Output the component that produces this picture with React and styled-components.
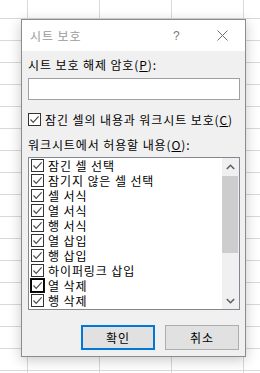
import React from 'react';
import styled, { createGlobalStyle } from 'styled-components';

const GlobalStyle = createGlobalStyle`
  html, body {
    margin: 0;
    padding: 0;
    width: 260px;
    height: 373px;
    overflow: hidden;
    background-color: #fff;
    background-image:
      linear-gradient(to right, #d9d9d9 1px, transparent 1px),
      linear-gradient(to bottom, #d9d9d9 1px, transparent 1px);
    background-size: 72px 100%, 100% 22px;
    background-position: 27px 0, 0 18px;
    font-family: "Noto Sans CJK KR", "Noto Sans", sans-serif;
  }
`;

const items = [
  '잠긴 셀 선택',
  '잠기지 않은 셀 선택',
  '셀 서식',
  '열 서식',
  '행 서식',
  '열 삽입',
  '행 삽입',
  '하이퍼링크 삽입',
  '열 삭제',
  '행 삭제',
];

const CheckMark = () => (
  <svg width="11" height="11" viewBox="0 0 11 11">
    <path d="M1.5 5.5 L4.2 8.3 L9.6 2.4" fill="none" stroke="#4d4d4d" strokeWidth="1.2" />
  </svg>
);

const Check = ({ focused }) => (
  <Box $focused={focused}>
    <CheckMark />
  </Box>
);

const App = () => {
  return (
    <>
      <GlobalStyle />
      <Dialog>
        <TitleBar>
          <Title>시트 보호</Title>
          <Help>?</Help>
          <Close>
            <svg width="11" height="11" viewBox="0 0 11 11">
              <path d="M0.5 0.5 L10.5 10.5 M10.5 0.5 L0.5 10.5" stroke="#6e6e6e" strokeWidth="1" />
            </svg>
          </Close>
        </TitleBar>
        <Body>
          <Label>시트 보호 해제 암호(<u>P</u>):</Label>
          <TextInput />
          <CheckRow>
            <Check />
            <span>잠긴 셀의 내용과 워크시트 보호(<u>C</u>)</span>
          </CheckRow>
          <Label $top={10}>워크시트에서 허용할 내용(<u>O</u>):</Label>
          <ListBox>
            <Items>
              {items.map((t, i) => (
                <Item key={t}>
                  <Check focused={i === 8} />
                  <span>{t}</span>
                </Item>
              ))}
            </Items>
            <ScrollBar>
              <Arrow>
                <svg width="9" height="6" viewBox="0 0 9 6">
                  <path d="M0.8 5 L4.5 1.3 L8.2 5" fill="none" stroke="#606060" strokeWidth="1.6" />
                </svg>
              </Arrow>
              <Track>
                <Thumb />
              </Track>
              <Arrow>
                <svg width="9" height="6" viewBox="0 0 9 6">
                  <path d="M0.8 1 L4.5 4.7 L8.2 1" fill="none" stroke="#606060" strokeWidth="1.6" />
                </svg>
              </Arrow>
            </ScrollBar>
          </ListBox>
          <ButtonRow>
            <Button $primary>확인</Button>
            <Button>취소</Button>
          </ButtonRow>
        </Body>
      </Dialog>
    </>
  );
};

export default App;

const Dialog = styled.div`
  position: absolute;
  left: 21px;
  top: 19px;
  width: 223px;
  height: 336px;
  border: 1px solid #8c8c8c;
  background: #f0f0f0;
  box-shadow: 0 3px 12px rgba(0, 0, 0, 0.22);
  display: flex;
  flex-direction: column;
  font-size: 12px;
  letter-spacing: 0.9px;
  color: #000;
`;

const TitleBar = styled.div`
  height: 31px;
  background: #fff;
  display: flex;
  align-items: center;
  padding-left: 8px;
`;

const Title = styled.div`
  flex: 1;
  color: #9a9a9a;
  font-size: 12px;
`;

const Help = styled.div`
  width: 10px;
  color: #7a7a7a;
  font-family: "Liberation Sans", sans-serif;
  font-size: 12px;
  margin-right: 34px;
`;

const Close = styled.div`
  width: 11px;
  height: 11px;
  display: flex;
  margin-right: 17px;
`;

const Body = styled.div`
  flex: 1;
  display: flex;
  flex-direction: column;
  padding: 6px 5px 0 6px;
`;

const Label = styled.div`
  height: 15px;
  line-height: 15px;
  margin-top: ${(p) => p.$top || 0}px;
  white-space: nowrap;
  u {
    text-underline-offset: 1px;
  }
`;

const TextInput = styled.div`
  margin-top: 6px;
  width: 210px;
  height: 20px;
  background: #fff;
  border: 1px solid #a0a0a0;
`;

const CheckRow = styled.div`
  margin-top: 12px;
  height: 15px;
  display: flex;
  align-items: center;
  gap: 4px;
  white-space: nowrap;
  line-height: 15px;
`;

const Box = styled.div`
  box-sizing: border-box;
  width: 13px;
  height: 13px;
  flex: none;
  background: #fff;
  border: 1px solid ${(p) => (p.$focused ? '#000' : '#333')};
  outline: ${(p) => (p.$focused ? '1px solid #111' : 'none')};
  display: flex;
  align-items: center;
  justify-content: center;
`;

const ListBox = styled.div`
  margin-top: 5px;
  width: 210px;
  height: 151px;
  border: 1px solid #828790;
  background: #fff;
  display: flex;
`;

const Items = styled.div`
  flex: 1;
  display: flex;
  flex-direction: column;
  padding-left: 2px;
`;

const Item = styled.div`
  height: 15px;
  display: flex;
  align-items: center;
  gap: 4px;
  line-height: 15px;
  white-space: nowrap;
`;

const ScrollBar = styled.div`
  width: 17px;
  background: #f0f0f0;
  display: flex;
  flex-direction: column;
`;

const Arrow = styled.div`
  height: 17px;
  display: flex;
  align-items: center;
  justify-content: center;
`;

const Track = styled.div`
  flex: 1;
  padding: 1px 1px 0 0;
`;

const Thumb = styled.div`
  height: 77px;
  background: #cdcdcd;
`;

const ButtonRow = styled.div`
  margin-top: 15px;
  display: flex;
  justify-content: flex-end;
  gap: 10px;
  padding-right: 1px;
`;

const Button = styled.div`
  box-sizing: border-box;
  width: 74px;
  height: 25px;
  background: #e1e1e1;
  border: ${(p) => (p.$primary ? '2px solid #0078d7' : '1px solid #adadad')};
  display: flex;
  align-items: center;
  justify-content: center;
  font-size: 12px;
`;
